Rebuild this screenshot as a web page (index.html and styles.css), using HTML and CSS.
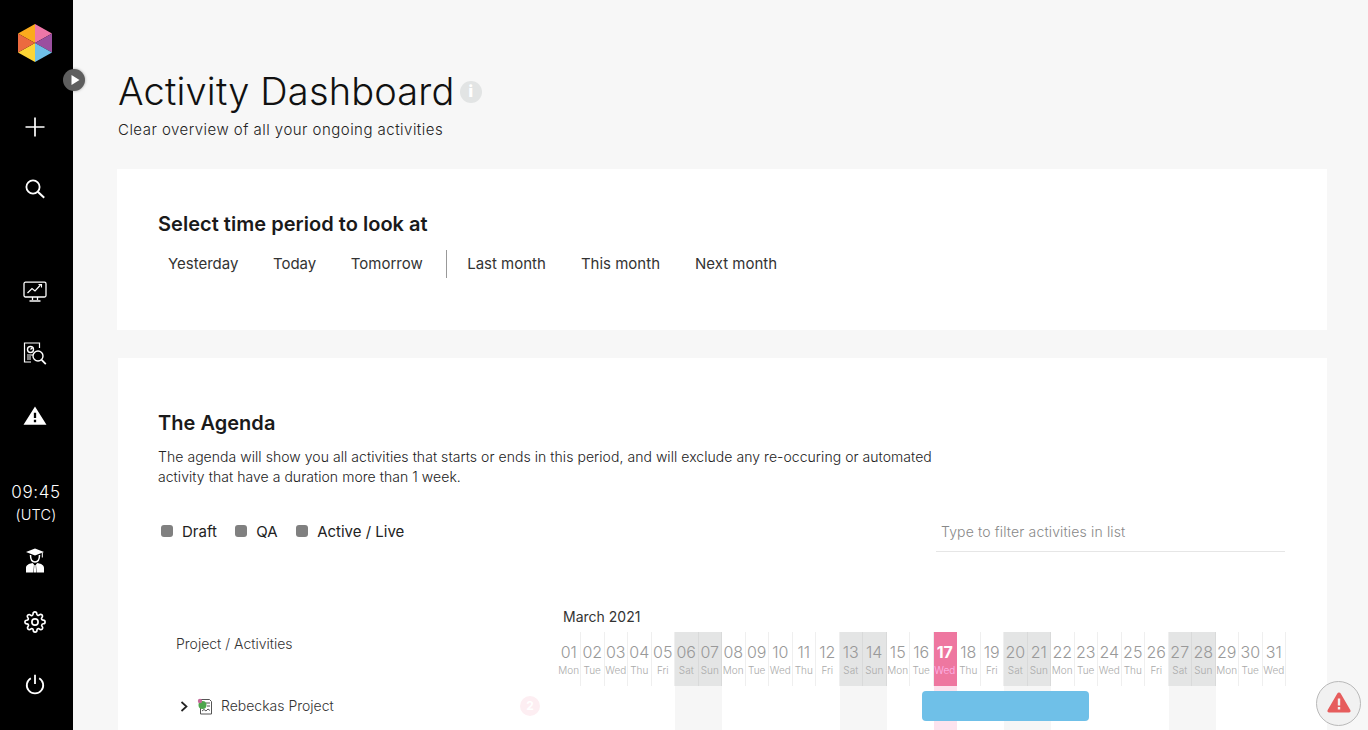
FILE: index.html
```html
<!DOCTYPE html>
<html lang="en">
<head>
<meta charset="utf-8">
<title>Activity Dashboard</title>
<link rel="stylesheet" href="styles.css">
</head>
<body>
<div class="app">
  <aside class="sidebar">
    <div class="logo">
      <svg width="36" height="40" viewBox="0 0 36 40">
        <polygon points="18,20 18,1 1,10.5" fill="#fbab1d"/>
        <polygon points="18,20 18,1 35,10.5" fill="#ee77a8"/>
        <polygon points="18,20 35,10.5 35,29.5" fill="#9b4f9f"/>
        <polygon points="18,20 35,29.5 18,39" fill="#6fc0e8"/>
        <polygon points="18,20 18,39 1,29.5" fill="#fdd535"/>
        <polygon points="18,20 1,29.5 1,10.5" fill="#ec6a3f"/>
      </svg>
    </div>
    <button class="toggle" aria-label="Expand">
      <svg width="10" height="12" viewBox="0 0 10 12"><polygon points="1.5,1 9.5,6 1.5,11" fill="#fff"/></svg>
    </button>
    <nav class="nav nav-top">
      <div class="nav-item"><svg width="22" height="22" viewBox="0 0 22 22"><path d="M11 1.5v19M1.5 11h19" stroke="#fff" stroke-width="1.7" fill="none"/></svg></div>
      <div class="nav-item"><svg width="22" height="22" viewBox="0 0 22 22"><circle cx="9" cy="9" r="6.6" stroke="#fff" stroke-width="1.8" fill="none"/><path d="M13.8 13.8l6.4 6" stroke="#fff" stroke-width="2" fill="none"/></svg></div>
    </nav>
    <nav class="nav nav-mid">
      <div class="nav-item"><svg width="24" height="22" viewBox="0 0 24 22" fill="none" stroke="#fff"><rect x="1" y="1.2" width="22" height="14.8" rx="1.5" stroke-width="1.3"/><path d="M4.5 12l4.5-4.5 3 2.5 5.5-6" stroke-width="1.2"/><path d="M15.5 3.5h3v3" stroke-width="1.1"/><path d="M9.5 16v3M14.5 16v3" stroke-width="1.3"/><path d="M6.5 20h11" stroke-width="1.5"/></svg></div>
      <div class="nav-item"><svg width="24" height="24" viewBox="0 0 24 24" fill="none" stroke="#fff"><path d="M16.5 6V1H1.500v19H8" stroke-width="1.2"/><circle cx="7.500" cy="7.500" r="3" stroke-width="1.4"/><path d="M7.500 7.500l2-2" stroke-width="1.2"/><path d="M4 13h6M4 15h4M4 17h4" stroke-width="1.2"/><circle cx="15" cy="14" r="5" stroke-width="1.4"/><path d="M18.6 17.8l4.200 4.400" stroke-width="1.8"/></svg></div>
      <div class="nav-item"><svg width="24" height="20" viewBox="0 0 23 19"><path fill="#fff" fill-rule="evenodd" d="M11.500 0.500L22.500 18H0.500zM10.400 6.500h2.200v5h-2.200zM10.400 13h2.200v2.500h-2.200z"/></svg></div>
    </nav>
    <div class="clock">
      <div class="clock-time">09:45</div>
      <div class="clock-zone">(UTC)</div>
    </div>
    <nav class="nav nav-bottom">
      <div class="nav-item"><svg width="20" height="25" viewBox="0 0 20 25"><path fill="#fff" d="M10 .5l9 3.500-9 3.500-9-3.500z"/><path d="M17.300 4.500v5" stroke="#fff" stroke-width="1"/><path d="M5.500 7c0 4 1 7 4.500 7s4.500-3 4.500-7" stroke="#fff" stroke-width="1.500" fill="none"/><path fill="#fff" d="M1 24.500v-4.500c0-2.500 2-4 6.500-5l1.500 1.500-.6 8zM19 24.500v-4.500c0-2.500-2-4-6.500-5l-1.500 1.500.6 8z"/><path fill="#fff" d="M9.300 17h1.400l.5 7.500h-2.400z"/></svg></div>
      <div class="nav-item"><svg width="22" height="22" viewBox="0 0 24 24" fill="none" stroke="#fff" stroke-width="1.8"><circle cx="12" cy="12" r="3.400"/><path d="M19.400 15a1.650 1.650 0 0 0 .33 1.820l.06.06a2 2 0 1 1-2.830 2.830l-.06-.06a1.650 1.650 0 0 0-2.800 1.170V21a2 2 0 1 1-4 0v-.09a1.650 1.650 0 0 0-2.800-1.170l-.06.06a2 2 0 1 1-2.830-2.830l.06-.06a1.650 1.650 0 0 0-1.170-2.800H3a2 2 0 1 1 0-4h.09a1.650 1.650 0 0 0 1.170-2.800l-.06-.06a2 2 0 1 1 2.830-2.830l.06.06a1.650 1.650 0 0 0 2.800-1.170V3a2 2 0 1 1 4 0v.09a1.650 1.650 0 0 0 2.800 1.170l.06-.06a2 2 0 1 1 2.830 2.830l-.06.06a1.650 1.650 0 0 0 1.170 2.800H21a2 2 0 1 1 0 4h-.09a1.650 1.650 0 0 0-1.510 1.110z"/></svg></div>
      <div class="nav-item"><svg width="20" height="21" viewBox="0 0 20 21" fill="none" stroke="#fff" stroke-width="1.8"><path d="M10 .8v9.200"/><path d="M5.800 4.200a8.200 8.200 0 1 0 8.400 0"/></svg></div>
    </nav>
  </aside>

  <main class="main">
    <header class="page-head">
      <div class="title-row">
        <h1 class="title">Activity Dashboard</h1>
        <span class="info-dot">i</span>
      </div>
      <p class="subtitle">Clear overview of all your ongoing activities</p>
    </header>

    <section class="card card-period">
      <h2 class="card-title">Select time period to look at</h2>
      <div class="period-links">
        <div class="period-group">
          <a class="period-link">Yesterday</a>
          <a class="period-link">Today</a>
          <a class="period-link">Tomorrow</a>
        </div>
        <span class="period-sep"></span>
        <div class="period-group period-group-months">
          <a class="period-link">Last month</a>
          <a class="period-link">This month</a>
          <a class="period-link">Next month</a>
        </div>
      </div>
    </section>

    <section class="card card-agenda">
      <h2 class="card-title">The Agenda</h2>
      <p class="agenda-text">The agenda will show you all activities that starts or ends in this period, and will exclude any re-occuring or automated activity that have a duration more than 1 week.</p>
      <div class="toolbar">
        <div class="legend">
          <span class="legend-item"><i class="swatch"></i>Draft</span>
          <span class="legend-item"><i class="swatch"></i>QA</span>
          <span class="legend-item"><i class="swatch"></i>Active / Live</span>
        </div>
        <div class="filter">Type to filter activities in list</div>
      </div>

      <div class="timeline">
        <div class="month-row"><span class="month">March 2021</span></div>
        <div class="tl-row tl-head">
          <div class="tl-label head-label">Project / Activities</div>
          <div class="days" id="days"></div>
        </div>
        <div class="tl-row tl-project">
          <div class="tl-label project-label">
            <svg class="chevron" width="8" height="11" viewBox="0 0 8 11"><path d="M1.500 1l5 4.500-5 4.500" stroke="#222" stroke-width="1.700" fill="none"/></svg>
            <svg class="project-icon" width="16" height="17" viewBox="0 0 16 17"><path d="M3.500 1.500h9l2 2v12.500h-11z" fill="#fff" stroke="#555" stroke-width="1"/><path d="M9 5h4M10 8h3M5 13l2-1.500 2 1.500 2-2 2 1.500" stroke="#555" stroke-width="1" fill="none"/><circle cx="5.500" cy="7" r="4" fill="#4ea64e"/><circle cx="3" cy="3" r="2.200" fill="#c66c9a"/></svg>
            <span class="project-name">Rebeckas Project</span>
            <span class="badge">2</span>
          </div>
          <div class="tracks" id="tracks"><div class="bar"></div></div>
        </div>
      </div>
    </section>
  </main>

  <button class="alert-btn" aria-label="Alerts">
    <svg width="24" height="21" viewBox="0 0 24 21"><path fill="#e65c5c" fill-rule="evenodd" d="M12 .5c.8 0 1.300.4 1.700 1.100l9.600 16.400c.7 1.300 0 2.500-1.400 2.500H2.100C.7 20.500 0 19.300.7 18L10.300 1.600C10.700.9 11.200.5 12 .5zM10.800 6.500v7h2.400v-7zM10.800 15v2.500h2.400V15z"/></svg>
  </button>
</div>
<script src="app.js"></script>
</body>
</html>
```

FILE: app.js
```js
var names = ['Mon', 'Tue', 'Wed', 'Thu', 'Fri', 'Sat', 'Sun'];
var days = document.getElementById('days');
var tracks = document.getElementById('tracks');
for (var d = 1; d <= 31; d++) {
  var name = names[(d - 1) % 7];
  var weekend = name === 'Sat' || name === 'Sun';
  var today = d === 17;
  var cell = document.createElement('div');
  cell.className = 'day' + (weekend ? ' is-weekend' : '') + (today ? ' is-today' : '');
  cell.innerHTML = '<span class="day-num">' + (d < 10 ? '0' : '') + d + '</span><span class="day-name">' + name + '</span>';
  days.appendChild(cell);
  var track = document.createElement('div');
  track.className = 'track' + (weekend ? ' is-weekend' : '') + (today ? ' is-today' : '');
  tracks.appendChild(track);
}
```

FILE: styles.css
```css
* { box-sizing: border-box; }
html, body { margin: 0; height: 730px; overflow: hidden; }
body { font-family: Inter, "Noto Sans", sans-serif; background: #f7f7f7; color: #222; }
.app { display: flex; height: 730px; position: relative; overflow: hidden; }

/* Sidebar */
.sidebar { width: 73px; flex: none; background: #000; color: #fff; display: flex; flex-direction: column; align-items: center; position: relative; padding-right: 3px; }
.logo { height: 96px; padding-top: 23px; display: flex; justify-content: center; align-items: flex-start; }
.toggle { position: absolute; left: 63px; top: 69px; width: 22px; height: 22px; padding: 0 0 0 2px; border: 0; border-radius: 50%; background: #5e5e5e; box-shadow: 0 0 3px rgba(0,0,0,.35); display: flex; align-items: center; justify-content: center; z-index: 2; }
.nav { display: flex; flex-direction: column; width: 100%; }
.nav-item { height: 62px; display: flex; align-items: center; justify-content: center; }
.nav-mid { margin-top: 40px; padding-top: 1px; }
.clock { margin-top: 33px; height: 52px; text-align: center; font-weight: 300; width: 100%; padding-left: 2px; }
.clock-time { font-size: 17px; line-height: 24px; letter-spacing: .6px; }
.clock-zone { font-size: 14.500px; line-height: 22px; letter-spacing: .2px; }
.nav-bottom { margin-top: -3px; }

/* Main */
.main { flex: 1; min-width: 0; padding: 0 41px 0 44px; }
.page-head { padding: 68px 0 0 1px; height: 169px; }
.title-row { display: flex; align-items: center; height: 46px; }
.title { margin: 0; font-size: 38px; line-height: 46px; font-weight: 300; color: #111; letter-spacing: .17px; }
.info-dot { width: 22px; height: 22px; margin: 2px 0 0 5px; border-radius: 50%; background: #e2e4e4; color: #fff; font-size: 15px; font-weight: 900; line-height: 22px; text-align: center; }
.subtitle { margin: 5px 0 0; font-size: 15px; line-height: 22px; font-weight: 300; color: #222; letter-spacing: .47px; }

.card { background: #fff; padding: 0 41px; }
.card-title { margin: 0; font-size: 20px; line-height: 26px; font-weight: 600; color: #1a1a1a; letter-spacing: .03px; }
.card-period { height: 161px; padding-top: 42px; }
.period-links { display: flex; align-items: center; height: 28px; margin-top: 13px; }
.period-group { display: flex; padding-left: 10px; gap: 34.500px; padding-right: 23.500px; }
.period-link { font-size: 15px; line-height: 28px; font-weight: 400; color: #333; }
.period-group-months { padding-left: 20px; padding-right: 0; gap: 35px; }
.period-sep { width: 1px; height: 28px; background: #999; }

.card-agenda { margin-top: 28px; padding-top: 52px; height: 400px; margin-left: 1px; padding-left: 40px; }
.agenda-text { margin: 11px 0 0; width: 780px; font-size: 14px; line-height: 20px; font-weight: 300; color: #222; letter-spacing: .05px; }
.toolbar { display: flex; justify-content: space-between; align-items: flex-start; margin-top: 28px; padding-right: 1px; }
.legend { display: flex; align-items: center; height: 32px; padding-left: 3px; gap: 18.500px; }
.legend-item { display: flex; align-items: center; font-size: 15px; color: #222; }
.swatch { width: 12px; height: 12px; border-radius: 3px; background: #808080; margin-right: 9px; }
.filter { width: 349px; height: 37px; padding: 3px 0 0 5px; border-bottom: 1px solid #e6e6e6; font-size: 14px; line-height: 28px; font-weight: 300; color: #888; letter-spacing: .15px; }

/* Timeline */
.timeline { margin-top: 54px; }
.month-row { padding-left: 405px; height: 26px; }
.month { font-size: 14px; line-height: 22px; color: #333; }
.tl-row { display: flex; }
.tl-label { width: 399.500px; flex: none; }
.tl-head { height: 54px; }
.head-label { padding: 0 0 0 18px; font-size: 14px; line-height: 24px; font-weight: 300; color: #333; }
.days, .tracks { display: flex; width: 728.500px; flex: none; position: relative; }
.day { flex: 1 1 0; min-width: 0; display: flex; flex-direction: column; align-items: center; padding-top: 10px; border-right: 1px solid #efefef; }
.day-num { font-size: 16px; line-height: 20px; font-weight: 300; color: #999; }
.day-name { font-size: 10px; line-height: 14px; margin-top: 1px; font-weight: 300; color: #aaa; white-space: nowrap; }
.day.is-weekend { background: #e4e5e5; border-right-color: #d9dada; }
.day.is-today { background: #ee77a0; border-right-color: #ee77a0; }
.day.is-today .day-num { color: #fff; font-weight: 700; }
.day.is-today .day-name { color: #fbe; }
.tl-project { height: 60px; }
.project-label { display: flex; align-items: flex-start; padding: 11px 0 0 22px; position: relative; }
.chevron { margin: 4px 0 0 0; }
.project-icon { margin: 1px 0 0 9px; }
.project-name { margin-left: 8px; font-size: 14px; line-height: 18px; font-weight: 300; color: #333; }
.badge { position: absolute; left: 362px; top: 10px; width: 20px; height: 20px; border-radius: 50%; background: #fdeef2; color: #fff; font-size: 12px; font-weight: 700; line-height: 20px; text-align: center; }
.track { flex: 1 1 0; min-width: 0; }
.track.is-weekend { background: #f6f6f6; }
.track.is-today { background: #fce3ee; }
.bar { position: absolute; left: 364.500px; top: 5px; width: 167px; height: 30px; border-radius: 4px; background: #6fc0e8; }

/* Floating alert */
.alert-btn { position: absolute; left: 1316px; top: 681px; width: 45px; height: 45px; padding: 0 0 2px; border: 1px solid #b9b9b9; border-radius: 50%; background: #f1f1f1; display: flex; align-items: center; justify-content: center; }
```
